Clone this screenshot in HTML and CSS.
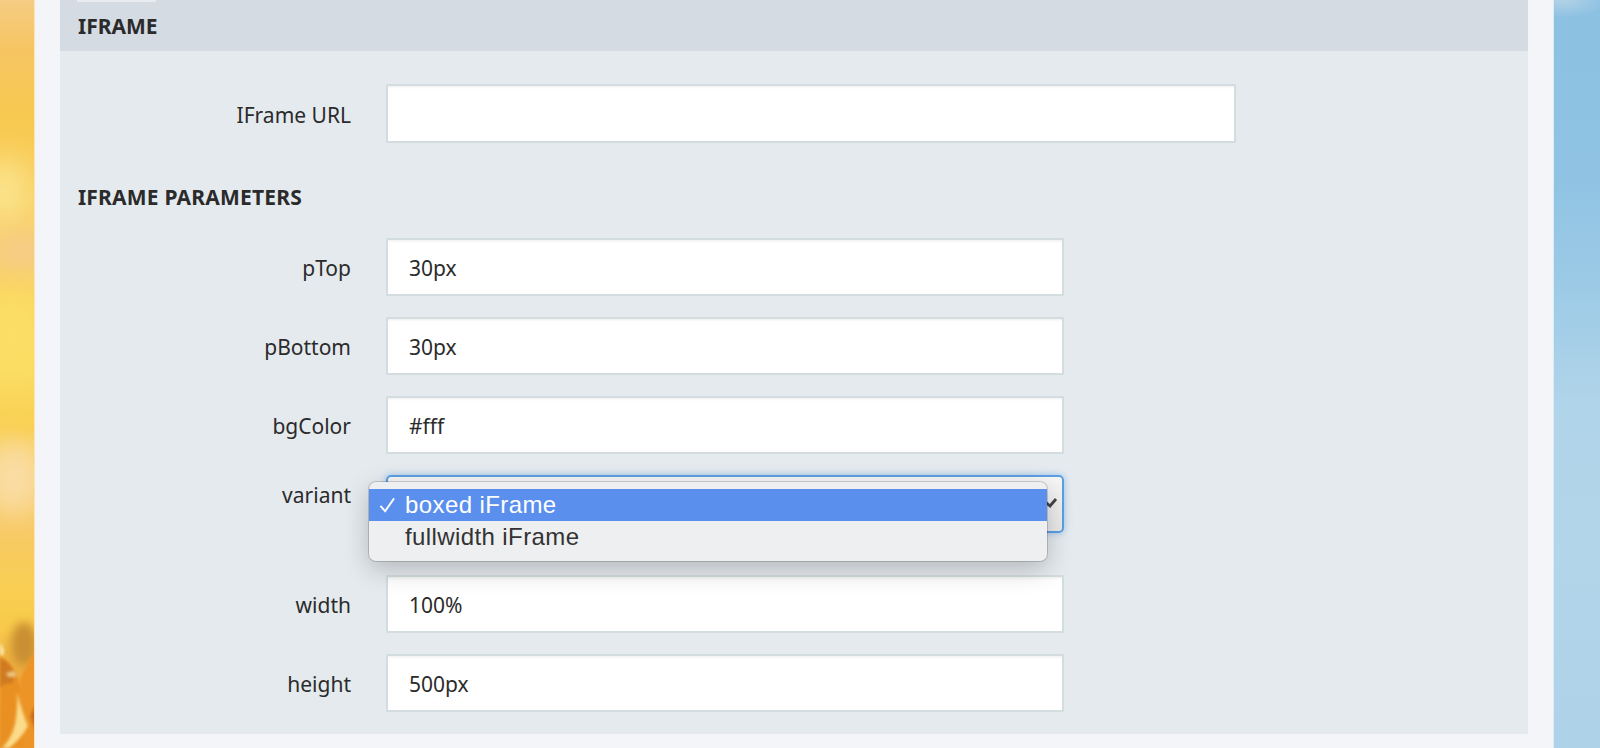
FILE: index.html
```html
<!DOCTYPE html>
<html lang="en">
<head>
<meta charset="utf-8">
<title>IFrame</title>
<link rel="stylesheet" href="styles.css">
</head>
<body>
<div class="edge edge-left">
  <svg class="petals" viewBox="0 0 34 748" preserveAspectRatio="none" aria-hidden="true">
    <defs>
      <filter id="soft" x="-30%" y="-30%" width="160%" height="160%"><feGaussianBlur stdDeviation="1.5"/></filter>
      <filter id="softer" x="-50%" y="-50%" width="200%" height="200%"><feGaussianBlur stdDeviation="5"/></filter>
      <filter id="blob" x="-100%" y="-100%" width="300%" height="300%"><feGaussianBlur stdDeviation="14"/></filter>
    </defs>
    <ellipse cx="4" cy="190" rx="24" ry="32" fill="#fbe794" opacity=".8" filter="url(#blob)"/>
    <ellipse cx="22" cy="250" rx="30" ry="14" fill="#f5c89a" opacity=".8" filter="url(#blob)"/>
    <ellipse cx="12" cy="335" rx="30" ry="44" fill="#fcdf68" opacity=".8" filter="url(#blob)"/>
    <ellipse cx="14" cy="478" rx="32" ry="38" fill="#fbdfb0" opacity=".85" filter="url(#blob)"/>
    <ellipse cx="24" cy="644" rx="13" ry="22" fill="#c98f33" filter="url(#softer)"/>
    <path d="M0 656 L10 664 L18 678 L22 690 L30 748 L0 748Z" fill="#ea9024" filter="url(#soft)"/>
    <path d="M0 658 Q10 662 15 674 L12 684 Q4 682 0 688Z" fill="#cf7a20" filter="url(#soft)"/>
    <path d="M20 680 Q25 666 36 650 L36 748 L24 748Z" fill="#ec9428" filter="url(#soft)"/>
    <path d="M30 716 L36 704 L36 732Z" fill="#c66c1c" filter="url(#soft)"/>
    <path d="M0 642 L4 650 L3 656 L0 654Z" fill="#fdebb0" filter="url(#soft)"/>
    <path d="M6 673 Q12 670 16 672 L16 677 L8 677Z" fill="#eec27a" filter="url(#soft)"/>
    <path d="M17 692 Q22 712 28 726 Q20 740 9 748 L2 748 Q12 738 15 724 Q18 708 17 692Z" fill="#fbdc8a" filter="url(#soft)"/>
  </svg>
</div>
<main class="page">
  <section class="panel">
    <header class="panel-head">
      <span class="tab-mark"></span>
      <h2 class="panel-title">IFRAME</h2>
    </header>
    <form class="panel-body">
      <div class="row row-url">
        <label class="label" for="url">IFrame URL</label>
        <input class="field field-wide" id="url" type="text">
      </div>
      <h3 class="subhead">IFRAME PARAMETERS</h3>
      <div class="row">
        <label class="label" for="ptop">pTop</label>
        <input class="field" id="ptop" type="text" value="30px">
      </div>
      <div class="row">
        <label class="label" for="pbottom">pBottom</label>
        <input class="field" id="pbottom" type="text" value="30px">
      </div>
      <div class="row">
        <label class="label" for="bgcolor">bgColor</label>
        <input class="field" id="bgcolor" type="text" value="#fff">
      </div>
      <div class="row row-select">
        <label class="label label-top" for="variant">variant</label>
        <div class="select-wrap">
          <div class="select-box" id="variant">
            <svg class="chevron" viewBox="0 0 14 10" aria-hidden="true"><path d="M2 5 L6 8.5 L12 1.5" fill="none" stroke="#444" stroke-width="2.8"/></svg>
          </div>
          <div class="menu">
            <div class="menu-item menu-item-on">
              <svg class="tick" viewBox="0 0 18 16" aria-hidden="true"><path d="M1.5 9 L6.5 14.5 L16 1" fill="none" stroke="#fff" stroke-width="2"/></svg>
              boxed iFrame
            </div>
            <div class="menu-item">fullwidth iFrame</div>
          </div>
        </div>
      </div>
      <div class="row">
        <label class="label" for="width">width</label>
        <input class="field" id="width" type="text" value="100%">
      </div>
      <div class="row row-last">
        <label class="label" for="height">height</label>
        <input class="field" id="height" type="text" value="500px">
      </div>
    </form>
  </section>
</main>
<div class="edge edge-right"></div>
</body>
</html>
```
FILE: styles.css
```css
* { box-sizing: border-box; }
html, body { margin: 0; height: 748px; overflow: hidden; }
body {
  display: flex;
  background: #f3f5f9;
  font-family: "Noto Sans", "Open Sans", sans-serif;
  color: #2b2b2b;
}
.edge { flex: none; height: 748px; position: relative; }
.edge-left {
  width: 34px;
  box-shadow: 1px 0 0 #fde3b4;
  background: linear-gradient(180deg, #f5cc82 0, #f6c562 50px, #f8c94f 120px, #f9d268 200px, #f8d070 260px, #fad660 300px, #fbdb62 370px, #f8cf50 430px, #f8d060 450px, #f7c965 530px, #f9cf52 590px, #f8c94a 630px, #eeb040 660px, #e99a33 748px);
}
.petals { display: block; position: absolute; inset: 0; width: 34px; height: 748px; }
.edge-right {
  width: 46px;
  box-shadow: -1px 0 0 #dcebf4;
  background:
    radial-gradient(ellipse 46px 18px at 8px 0, #b3d2e6 0, rgba(179,210,230,0) 100%),
    linear-gradient(180deg, #8cc1e2 0, #90c3e3 180px, #9bcae6 280px, #b0d4e9 400px, #b3d5ea 560px, #aed2e8 748px);
}
.page {
  flex: 1;
  min-width: 0;
  padding: 0 26px 14px;
}
.panel { background: #e5eaee; }
.panel-head {
  position: relative;
  height: 51px;
  background: #d4dbe2;
  padding: 0 18px;
  display: flex;
  align-items: center;
}
.tab-mark {
  position: absolute;
  left: 17px;
  top: 0;
  width: 79px;
  height: 2px;
  background: #e8ecf0;
}
.panel-title, .subhead {
  margin: 0;
  font-size: 21px;
  line-height: 28px;
  font-weight: 700;
  color: #2b2b2b;
}
.panel-body { padding: 33px 0 22px; }
.subhead { margin: 40px 0 27px 18px; letter-spacing: .2px; }
.row {
  display: flex;
  align-items: center;
  margin-bottom: 21px;
}
.row-url { margin-bottom: 0; }
.row-select { margin-bottom: 42px; align-items: flex-start; }
.row-last { margin-bottom: 0; }
.label {
  width: 326px;
  padding: 2px 35px 0 0;
  text-align: right;
  font-size: 21px;
  line-height: 28px;
  color: #2b2b2b;
  flex: none;
}
.label-top { padding-top: 6px; }
.field {
  width: 678px;
  height: 58px;
  border: 2px solid #d3dcde;
  border-radius: 1px;
  background: #fff;
  box-shadow: inset 0 3px 3px -2px rgba(0,0,0,.07);
  padding: 2px 21px 0;
  font: 21px "Noto Sans", "Open Sans", sans-serif;
  color: #2b2b2b;
  outline: none;
}
.field-wide { width: 850px; height: 59px; }
.select-wrap { position: relative; width: 678px; height: 58px; }
.select-box {
  height: 58px;
  border: 2px solid #5b9fe3;
  border-radius: 5px;
  background: linear-gradient(180deg, #f6f6f6, #e8e8e8);
  box-shadow: 0 0 7px rgba(91,159,227,.55);
}
.chevron {
  position: absolute;
  right: 6px;
  top: 22px;
  width: 14px;
  height: 11px;
}
.menu {
  position: absolute;
  left: -17px;
  top: 7px;
  width: 678px;
  height: 79px;
  padding-top: 7px;
  background: #eeeff0;
  border-radius: 7px;
  box-shadow: 0 0 0 1px rgba(0,0,0,.16), 0 8px 26px rgba(0,0,0,.22);
  font-family: "Liberation Sans", Arial, sans-serif;
  font-size: 24px;
  letter-spacing: .4px;
  color: #333;
}
.menu-item {
  position: relative;
  height: 32px;
  line-height: 31px;
  padding-left: 36px;
}
.menu-item-on { background: #5a8fee; color: #fff; }
.tick {
  position: absolute;
  left: 10px;
  top: 8px;
  width: 17px;
  height: 16px;
}
```
